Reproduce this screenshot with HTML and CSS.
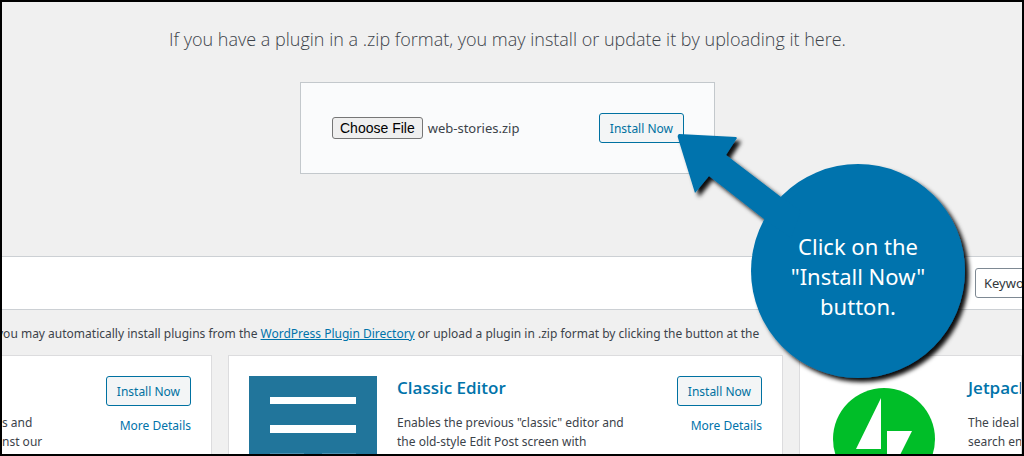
FILE: index.html
```html
<!DOCTYPE html>
<html lang="en">
<head>
<meta charset="utf-8">
<title>Add Plugins</title>
<link rel="stylesheet" href="styles.css">
</head>
<body>
<main class="frame">
  <section class="upload">
    <p class="upload-help">If you have a plugin in a .zip format, you may install or update it by uploading it here.</p>
    <form class="upload-form">
      <div class="file-field">
        <button class="file-button" type="button" aria-describedby="file-name">Choose File</button>
        <span class="file-name" id="file-name">web-stories.zip</span>
      </div>
      <button class="button" type="button">Install Now</button>
    </form>
  </section>

  <div class="filter-bar">
    <select class="search-type" aria-label="Search plugins by">
      <option>Keyword</option>
      <option>Author</option>
      <option>Tag</option>
    </select>
  </div>

  <p class="intro">you may automatically install plugins from the <a href="#">WordPress Plugin Directory</a> or upload a plugin in .zip format by clicking the button at the</p>

  <div class="cards">
    <article class="card card-first">
      <p class="card-text">s and<br>nst our</p>
      <div class="actions">
        <button class="button" type="button">Install Now</button>
        <a href="#">More Details</a>
      </div>
    </article>

    <article class="card">
      <svg class="plugin-icon" viewBox="0 0 128 128" aria-hidden="true">
        <rect width="128" height="128" fill="#21759b"/>
        <path fill="#fff" d="M21 21h86v7H21zM21 49h86v8H21z"/>
        <path fill="#4b91b3" d="M21 77h34v8H21zM73 77h34v8H73z"/>
      </svg>
      <div class="details">
        <h3><a href="#">Classic Editor</a></h3>
        <p>Enables the previous "classic" editor and<br>the old-style Edit Post screen with</p>
      </div>
      <div class="actions">
        <button class="button" type="button">Install Now</button>
        <a href="#">More Details</a>
      </div>
    </article>

    <article class="card">
      <svg class="plugin-icon" viewBox="0 0 128 128" aria-hidden="true">
        <circle cx="64" cy="63" r="51" fill="#00be28"/>
        <path fill="#fff" d="M61 22v51H36zM67 55h25L67 105z"/>
      </svg>
      <div class="details details-wide">
        <h3><a href="#">Jetpack</a></h3>
        <p>The ideal<br>search en</p>
      </div>
    </article>
  </div>

  <aside class="callout">
    <svg class="callout-shape" viewBox="0 0 300 260" aria-hidden="true">
      <defs>
        <filter id="shadow" x="-10%" y="-10%" width="120%" height="120%">
          <feDropShadow dx="4" dy="4" stdDeviation="2" flood-color="#000" flood-opacity="0.95"/>
        </filter>
      </defs>
      <g fill="#0073ad" filter="url(#shadow)">
        <circle cx="187" cy="143" r="107"/>
        <path d="M8 6Q6 7 7 10L24 65 38 48 93 91 120 110 130 83 110 69 55 27 66 10 65 9Z"/>
      </g>
    </svg>
    <p class="callout-text">Click on the<br>"Install Now"<br>button.</p>
  </aside>
</main>
</body>
</html>
```
FILE: styles.css
```css
* {
  box-sizing: border-box;
}

body {
  margin: 0;
  background: #f0f0f0;
  color: #3c434a;
  font-family: "Noto Sans", "Open Sans", sans-serif;
  font-size: 12px;
  line-height: 19px;
}

p,
h3 {
  margin: 0;
}

a {
  color: #0073aa;
}

.frame {
  position: relative;
  display: flex;
  flex-direction: column;
  height: 100vh;
  overflow: hidden;
  border: 2px solid #000;
}

.upload {
  display: flex;
  flex: none;
  flex-direction: column;
  align-items: center;
  gap: 30px;
  padding: 24px 9px 82px 0;
}

.upload-help {
  color: #3c434a;
  font-family: "Open Sans", "Noto Sans", sans-serif;
  font-size: 18px;
  font-weight: 300;
  line-height: 26px;
}

.upload-form {
  display: flex;
  align-items: center;
  justify-content: space-between;
  width: 100%;
  max-width: 415px;
  padding: 30px;
  border: 1px solid #c3c8cc;
  background: #fafbfc;
}

.file-field {
  display: flex;
  align-items: center;
  gap: 5px;
  padding-left: 1px;
}

.file-button {
  height: 22px;
  padding: 0 7px;
  border: 1px solid #767676;
  border-radius: 3px;
  background: #efefef;
  color: #000;
  font: 14px "Liberation Sans", Arial, sans-serif;
}

.file-name {
  font-size: 13px;
}

.button {
  height: 30px;
  padding: 0 10px;
  border: 1px solid #0071a1;
  border-radius: 3px;
  background: #f3f5f6;
  color: #0071a1;
  font: inherit;
  white-space: nowrap;
}

.filter-bar {
  display: flex;
  flex: none;
  justify-content: flex-end;
  padding: 11px 0;
  border: solid #ccd0d4;
  border-width: 1px 0;
  background: #fff;
}

.search-type {
  flex: none;
  width: 96px;
  height: 30px;
  margin-right: -49px;
  padding: 0 8px;
  appearance: none;
  border: 1px solid #7e8993;
  border-radius: 3px;
  background: #fff;
  color: #32373c;
  font: inherit;
  font-size: 13px;
}

.intro {
  flex: none;
  margin-left: -5px;
  padding: 14px 0 12px;
  white-space: nowrap;
}

.cards {
  display: grid;
  flex: none;
  grid-template-columns: 210fr 555fr 223fr;
  gap: 16px;
}

.card {
  display: flex;
  gap: 20px;
  min-width: 0;
  height: 170px;
  overflow: hidden;
  padding: 20px;
  border: 1px solid #dcdcde;
  background: #fff;
}

.card-first {
  justify-content: space-between;
  padding-left: 0;
  border-left: 0;
}

.card-text {
  padding-top: 37px;
  white-space: nowrap;
}

.plugin-icon {
  flex: none;
  width: 128px;
  height: 128px;
}

.details {
  flex: 1;
  min-width: 0;
}

.details-wide {
  flex: none;
  white-space: nowrap;
}

.details h3 {
  margin-bottom: 13px;
  font-family: "Open Sans", "Noto Sans", sans-serif;
  font-size: 17px;
  font-weight: 600;
  line-height: 24px;
}

.details h3 a,
.actions a {
  text-decoration: none;
}

.actions {
  display: flex;
  flex: none;
  flex-direction: column;
  align-items: flex-end;
  gap: 10px;
}

/* Floating annotation laid over the page */
.callout {
  position: absolute;
  top: 126px;
  left: 669px;
  width: 300px;
  height: 260px;
}

.callout-shape {
  display: block;
  width: 300px;
  height: 260px;
  overflow: visible;
}

.callout-text {
  position: absolute;
  top: 103px;
  left: 80px;
  width: 214px;
  color: #fff;
  font-size: 22px;
  line-height: 30px;
  text-align: center;
}
```
